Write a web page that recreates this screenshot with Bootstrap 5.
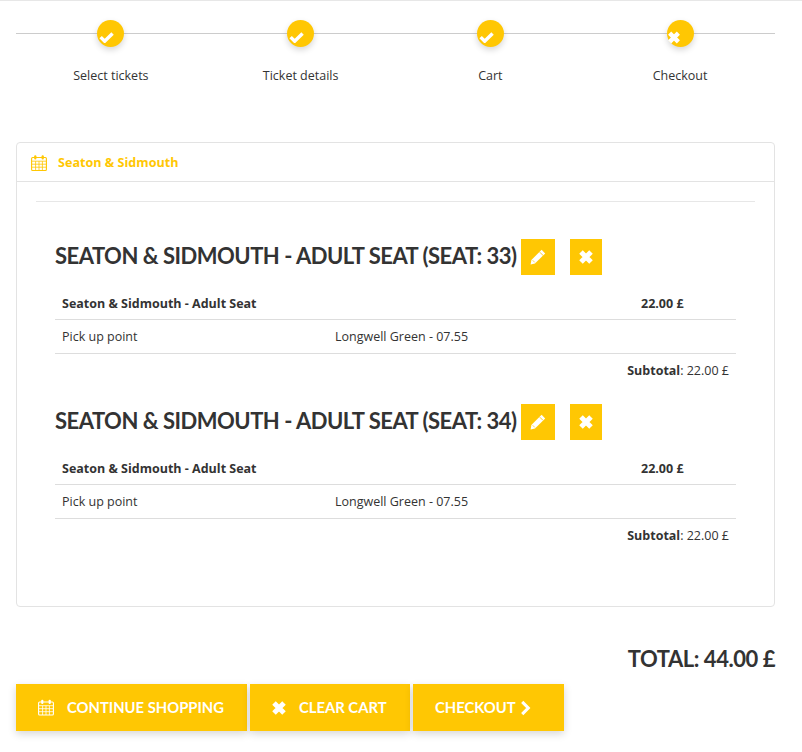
<!DOCTYPE html>
<html lang="en">
<head>
<meta charset="utf-8">
<title>Cart</title>
<link href="https://cdn.jsdelivr.net/npm/bootstrap@5.3.0/dist/css/bootstrap.min.css" rel="stylesheet">
<style>
body{font-family:"Open Sans","Liberation Sans",sans-serif;font-size:13px;color:#333;background:#fff;border-top:1px solid #e7e7e7;height:751px;overflow:hidden}
.page-wrap{padding:0 27px 0 16px}
.stepper{position:relative;height:141px;padding-top:19px}
.stepper-line{height:1px;background:#ccc;position:absolute;left:0;right:0;top:32px}
.step-dot{width:27px;height:27px;border-radius:50%;background:#ffc703;box-shadow:0 3px 6px rgba(0,0,0,.16);position:relative;display:flex;align-items:center;justify-content:center;margin:0 auto}
.step-dot .ok-mark{margin:8px 8px 0 0}
.step-dot .no-mark{margin:8px 13px 0 0}
.step-label{font-size:12.5px;line-height:18px;text-align:center;margin-top:20px;color:#333}
.cart-card{height:465px;border:1px solid #e3e3e3;border-radius:4px}
.cart-head{height:39px;background:#fff;border-bottom:1px solid #e3e3e3;padding:2px 0 0 14px;color:#ffc703;font-weight:700;font-size:12.6px;gap:11px}
.cart-body{padding:19px 19px 0}
.cart-rule{height:1px;background:#e7e7e7;margin-bottom:37px}
.ticket{padding:0 19px;margin-bottom:24px}
.ticket-title{font-family:Lato,"Liberation Sans",sans-serif;font-weight:700;font-size:22px;line-height:32px;letter-spacing:-.5px;color:#333;margin:0 0 12px;display:flex;align-items:center}
.ticket-title .title-text{margin-bottom:3px}
.icon-sq{height:36px;background:#ffc703;border:0;border-radius:0;padding:0;display:flex;align-items:center;justify-content:center}
.icon-sq:hover{background:#ffc703}
.icon-sq.sq-edit{width:34px;margin-left:4px}
.icon-sq.sq-del{width:32px;margin-left:15px}
.ticket-table{margin:0;font-size:12.5px;color:#333;table-layout:fixed}
.ticket-table td{padding:8px 7px 7px;line-height:18px;border-color:#ddd;color:#333;height:34px}
.ticket-table tr:first-child td{height:32px;font-weight:700;padding-top:8px;padding-bottom:6px}
.subtotal{text-align:right;padding:8px 7px 0;font-size:12.5px;line-height:18px}
.total-line{font-family:Lato,"Liberation Sans",sans-serif;font-weight:700;font-size:22px;line-height:30px;letter-spacing:-.46px;text-align:right;color:#333;margin:37px 0 10px}
.action-row{gap:3px}
.act-btn{height:47px;background:#ffc703;border:0;border-radius:0;color:#fff;font-family:Lato,"Liberation Sans",sans-serif;font-weight:700;font-size:14.8px;text-transform:uppercase;display:flex;align-items:center;box-shadow:0 3px 8px rgba(0,0,0,.16);padding:0}
.act-btn:hover{background:#ffc703;color:#fff}
.act-1{width:231px;padding-left:22px;gap:13px}
.act-2{width:160px;padding-left:21px;gap:12px}
.act-3{width:151px;padding-left:22px;gap:4px}
</style>
</head>
<body>
<svg width="0" height="0" class="d-block" style="position:absolute">
<defs>
<symbol id="i-check" viewBox="0 0 16 12"><path d="M1.6 5.6 6 10 14.6 1.6" fill="none" stroke="#fff" stroke-width="3.8"/></symbol>
<symbol id="i-x" viewBox="0 0 16 16"><path d="M3 3 13 13M13 3 3 13" fill="none" stroke="#fff" stroke-width="5"/></symbol>
<symbol id="i-pencil" viewBox="0 0 16 16"><path d="M11.6 .8 15.2 4.4 5 14.6 .6 15.4 1.4 11Z" fill="#fff"/><path d="M9.8 3.2 12.8 6.2" stroke="#ffc703" stroke-width=".9"/><path d="M2.6 11.2 4.8 13.4" stroke="#ffc703" stroke-width=".7"/></symbol>
<symbol id="i-cal" viewBox="0 0 16 16"><g fill="none" stroke="currentColor" stroke-width="1.1"><rect x=".6" y="2.5" width="14.8" height="13" rx="1"/><path d="M1 6.2H15M1 9.2H15M1 12.2H15M4.6 6.2V15.5M8 6.2V15.5M11.4 6.2V15.5" stroke-width=".8"/></g><rect x="3.2" y=".3" width="2.2" height="4.2" rx="1" fill="currentColor"/><rect x="10.6" y=".3" width="2.2" height="4.2" rx="1" fill="currentColor"/></symbol>
</defs>
</svg>
<div class="page-wrap">
  <div class="stepper">
    <div class="stepper-line"></div>
    <div class="row g-0">
      <div class="col-3"><div class="step-dot"><svg class="ok-mark" width="15" height="11"><use href="#i-check"/></svg></div><div class="step-label">Select tickets</div></div>
      <div class="col-3"><div class="step-dot"><svg class="ok-mark" width="15" height="11"><use href="#i-check"/></svg></div><div class="step-label">Ticket details</div></div>
      <div class="col-3"><div class="step-dot"><svg class="ok-mark" width="15" height="11"><use href="#i-check"/></svg></div><div class="step-label">Cart</div></div>
      <div class="col-3"><div class="step-dot"><svg class="no-mark" width="15" height="15"><use href="#i-x"/></svg></div><div class="step-label">Checkout</div></div>
    </div>
  </div>

  <div class="card cart-card">
    <div class="card-header cart-head d-flex align-items-center">
      <svg width="16" height="18"><use href="#i-cal"/></svg><span>Seaton &amp; Sidmouth</span>
    </div>
    <div class="card-body cart-body">
      <div class="cart-rule"></div>

      <div class="ticket">
        <h3 class="ticket-title"><span class="title-text">SEATON &amp; SIDMOUTH - ADULT SEAT (SEAT: 33)</span>
          <button class="btn icon-sq sq-edit" aria-label="Edit"><svg width="16" height="16"><use href="#i-pencil"/></svg></button>
          <button class="btn icon-sq sq-del" aria-label="Remove"><svg width="16" height="16"><use href="#i-x"/></svg></button>
        </h3>
        <table class="table ticket-table">
          <colgroup><col style="width:273px"><col style="width:306px"><col></colgroup>
          <tr><td>Seaton &amp; Sidmouth - Adult Seat</td><td></td><td>22.00 £</td></tr>
          <tr><td>Pick up point</td><td colspan="2">Longwell Green - 07.55</td></tr>
        </table>
        <div class="subtotal"><b>Subtotal</b>: 22.00 £</div>
      </div>

      <div class="ticket">
        <h3 class="ticket-title"><span class="title-text">SEATON &amp; SIDMOUTH - ADULT SEAT (SEAT: 34)</span>
          <button class="btn icon-sq sq-edit" aria-label="Edit"><svg width="16" height="16"><use href="#i-pencil"/></svg></button>
          <button class="btn icon-sq sq-del" aria-label="Remove"><svg width="16" height="16"><use href="#i-x"/></svg></button>
        </h3>
        <table class="table ticket-table">
          <colgroup><col style="width:273px"><col style="width:306px"><col></colgroup>
          <tr><td>Seaton &amp; Sidmouth - Adult Seat</td><td></td><td>22.00 £</td></tr>
          <tr><td>Pick up point</td><td colspan="2">Longwell Green - 07.55</td></tr>
        </table>
        <div class="subtotal"><b>Subtotal</b>: 22.00 £</div>
      </div>
    </div>
  </div>

  <div class="total-line">TOTAL: 44.00 £</div>

  <div class="d-flex action-row">
    <button class="btn act-btn act-1"><svg width="16" height="17"><use href="#i-cal"/></svg>Continue shopping</button>
    <button class="btn act-btn act-2"><svg width="16" height="16"><use href="#i-x"/></svg>Clear cart</button>
    <button class="btn act-btn act-3">Checkout<svg width="11" height="16" viewBox="0 0 10 14"><path d="M2 1.5 7.5 7 2 12.5" fill="none" stroke="#fff" stroke-width="2.8"/></svg></button>
  </div>
</div>
<script src="https://cdn.jsdelivr.net/npm/bootstrap@5.3.0/dist/js/bootstrap.bundle.min.js"></script>
</body>
</html>
